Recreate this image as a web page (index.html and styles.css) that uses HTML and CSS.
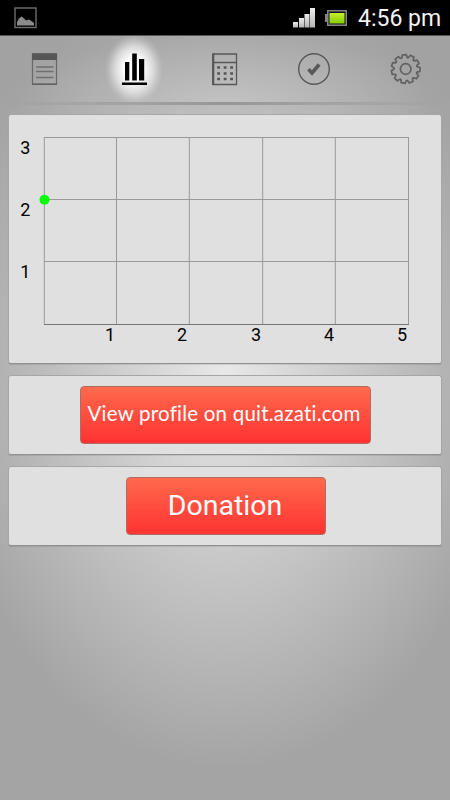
FILE: index.html
```html
<!DOCTYPE html>
<html lang="en">
<head>
<meta charset="utf-8">
<title>Statistics</title>
<link rel="stylesheet" href="styles.css">
</head>
<body>
<header class="status">
  <svg class="status-picture" width="24" height="22" viewBox="0 0 24 22">
    <rect x="1" y="1" width="21" height="19.5" fill="#000" stroke="#6e6e6e" stroke-width="1.4"/>
    <path d="M3 18.500V15L5 11.500L7.500 9.500L10 11.500L12 13.500L15 12.500L18 14.500L20 16V18.500Z" fill="#8c8c8c"/>
  </svg>
  <svg class="status-signal" width="22" height="20" viewBox="0 0 22 20">
    <defs><linearGradient id="bar" x2="0" y2="1"><stop stop-color="#ededed"/><stop offset="1" stop-color="#b5b5b5"/></linearGradient></defs>
    <g fill="url(#bar)"><rect y="14" width="5" height="5.500"/><rect x="6" y="10" width="5" height="9.500"/><rect x="11.500" y="6" width="5" height="13.500"/><rect x="17" y="0" width="5" height="19.500"/></g>
  </svg>
  <svg class="status-battery" width="22" height="16" viewBox="0 0 22 16">
    <defs><linearGradient id="charge" x2="0" y2="1"><stop stop-color="#c4ef2c"/><stop offset="1" stop-color="#86cc00"/></linearGradient></defs>
    <path d="M0 4H2V0H22V16H2V12H0Z" fill="#858585"/>
    <rect x="3.500" y="1.500" width="17" height="13" fill="#10141c"/>
    <rect x="4.500" y="3" width="15" height="10.500" fill="url(#charge)"/>
  </svg>
  <span class="clock">4:56 pm</span>
</header>
<nav class="tabs">
  <a class="tab"><svg width="90" height="66" viewBox="0 36 90 66">
    <rect x="32.500" y="54" width="24" height="30" fill="none" stroke="#686868" stroke-width="1.200"/>
    <rect x="32" y="53.300" width="25" height="6.700" fill="#565656"/>
    <path d="M36 67H53.500M36 71.500H53.500M36 77.500H53.500" stroke="#6f6f6f" stroke-width="1.400"/>
    <path d="M32 84.300H57" stroke="#5a5a5a"/>
  </svg></a>
  <a class="tab tab-active"><svg width="90" height="66" viewBox="90 36 90 66">
    <path d="M125 62H129.300V80.500H125ZM132.200 53.500H136.800V80.500H132.200ZM139 59H144.200V80.500H139ZM122 82.500H147V85H122Z"/>
  </svg></a>
  <a class="tab"><svg width="90" height="66" viewBox="180 36 90 66">
    <path d="M213 54H236.500V84.500H213ZM213 62.500H236.500" fill="none" stroke="#575757" stroke-width="1.300"/>
    <path d="M213.200 53.500V85" stroke="#575757" stroke-width="2.200"/>
    <path d="M217.200 67.500H220M223.700 67.500H226.500M230.200 67.500H233M217.200 73.500H220M223.700 73.500H226.500M230.200 73.500H233M217.200 79H220M223.700 79H226.500M230.200 79H233" stroke="#555" stroke-width="2.600"/>
  </svg></a>
  <a class="tab"><svg width="90" height="66" viewBox="270 36 90 66">
    <circle cx="314" cy="69" r="15.300" fill="none" stroke="#585858" stroke-width="1.400"/>
    <path d="M308.500 69.200L312 73L319.200 64.500" fill="none" stroke="#595959" stroke-width="3.600"/>
  </svg></a>
  <a class="tab"><svg width="90" height="66" viewBox="360 36 90 66">
    <defs><path id="tooth" d="M-3.270-11.130L-2.500-11.800L-2-14.300L2-14.300L2.500-11.800L3.270-11.130"/></defs>
    <g transform="translate(405.700 69)" fill="none" stroke="#616161" stroke-width="1.700" stroke-linejoin="round" stroke-linecap="round">
      <circle r="5.300"/>
      <g transform="rotate(-6)">
      <use href="#tooth"/><use href="#tooth" transform="rotate(32.727)"/><use href="#tooth" transform="rotate(65.455)"/><use href="#tooth" transform="rotate(98.182)"/><use href="#tooth" transform="rotate(130.909)"/><use href="#tooth" transform="rotate(163.636)"/><use href="#tooth" transform="rotate(196.364)"/><use href="#tooth" transform="rotate(229.091)"/><use href="#tooth" transform="rotate(261.818)"/><use href="#tooth" transform="rotate(294.545)"/><use href="#tooth" transform="rotate(327.273)"/>
      </g>
    </g>
  </svg></a>
</nav>
<main class="content">
  <section class="card card-chart">
    <svg class="chart" width="432" height="248" viewBox="9 115 432 248">
      <path d="M44 137.500H409M44 199.500H409M44 261.500H409M44.300 137V324M116.500 137V324M189.300 137V324M262.700 137V324M335.300 137V324M408.500 137V324" stroke="#999" fill="none"/>
      <path d="M44 324.500H409" stroke="#777"/>
      <circle cx="44.500" cy="199.700" r="5" fill="#0f0"/>
      <g class="axis-text">
        <text x="25.300" y="154">3</text><text x="25.300" y="216">2</text><text x="25.300" y="278">1</text>
        <text x="110" y="341">1</text><text x="182" y="341">2</text><text x="256" y="341">3</text><text x="329" y="341">4</text><text x="402" y="341">5</text>
      </g>
    </svg>
  </section>
  <section class="card card-action"><button class="button button-profile"><span>View profile on quit.azati.com</span></button></section>
  <section class="card card-action"><button class="button button-donate"><span>Donation</span></button></section>
</main>
</body>
</html>
```

FILE: styles.css
```css
* { box-sizing: border-box; }
body {
  margin: 0;
  width: 450px;
  height: 800px;
  overflow: hidden;
  font-family: Roboto, sans-serif;
  background: radial-gradient(ellipse 285px 400px at 225px 370px, #e8e8e8 0%, #c6c6c6 50%, #a4a4a4 100%);
}
svg { display: block; }
.status {
  display: flex;
  height: 36px;
  padding: 0 9px 0 14px;
  background: #000;
  border-bottom: 1px solid #555;
}
.status-picture { margin-top: 7px; }
.status-signal { margin: 8px 10px 0 auto; }
.status-battery { margin: 10px 11px 0 0; }
.clock {
  width: 83px;
  color: #f2f2f2;
  font-size: 23px;
  line-height: 37px;
  white-space: nowrap;
}
.tabs {
  display: flex;
  height: 70px;
  padding-bottom: 4px;
  background:
    linear-gradient(90deg, transparent, rgba(125,125,125,.6) 50%, transparent) 0 66px / 100% 3px no-repeat,
    radial-gradient(ellipse 220px 66px at 50% 100%, rgba(205,205,205,.4), rgba(160,160,160,.4)) 0 0 / 100% 66px no-repeat;
}
.tab { width: 90px; height: 66px; }
.tab-active {
  background: radial-gradient(ellipse 29px 35px at 44px 33px, #fff 0%, rgba(255,255,255,.95) 35%, rgba(255,255,255,.55) 65%, rgba(255,255,255,.15) 87%, transparent 100%);
}
.content {
  display: flex;
  flex-direction: column;
  gap: 11px;
  padding: 8px 8px 0;
}
.card {
  border: 1px solid #a5a7a6;
  border-bottom-color: #8f9190;
  border-radius: 3px;
  background: #e0e0e0;
  box-shadow: 0 1px 1px rgba(0,0,0,.1);
}
.card-chart { height: 250px; }
.axis-text {
  font: 18px Roboto, sans-serif;
  text-anchor: middle;
  fill: #000;
}
.card-action {
  display: flex;
  justify-content: center;
  height: 80px;
  padding-top: 10px;
}
.button {
  height: 58px;
  padding: 0;
  border: 1px solid #b06b63;
  border-radius: 4px;
  background: linear-gradient(#ff6a4c, #ff3232);
  color: #fff;
  white-space: nowrap;
}
.button-profile {
  width: 291px;
  margin-left: 1px;
  padding: 0 3px 5px 0;
  font: 20.500px Lato, sans-serif;
  font-variant-ligatures: none;
  letter-spacing: .22px;
}
.button-donate {
  width: 200px;
  margin-left: 2px;
  padding: 0 2px 2px 0;
  font: 28.500px Roboto, sans-serif;
}
```
